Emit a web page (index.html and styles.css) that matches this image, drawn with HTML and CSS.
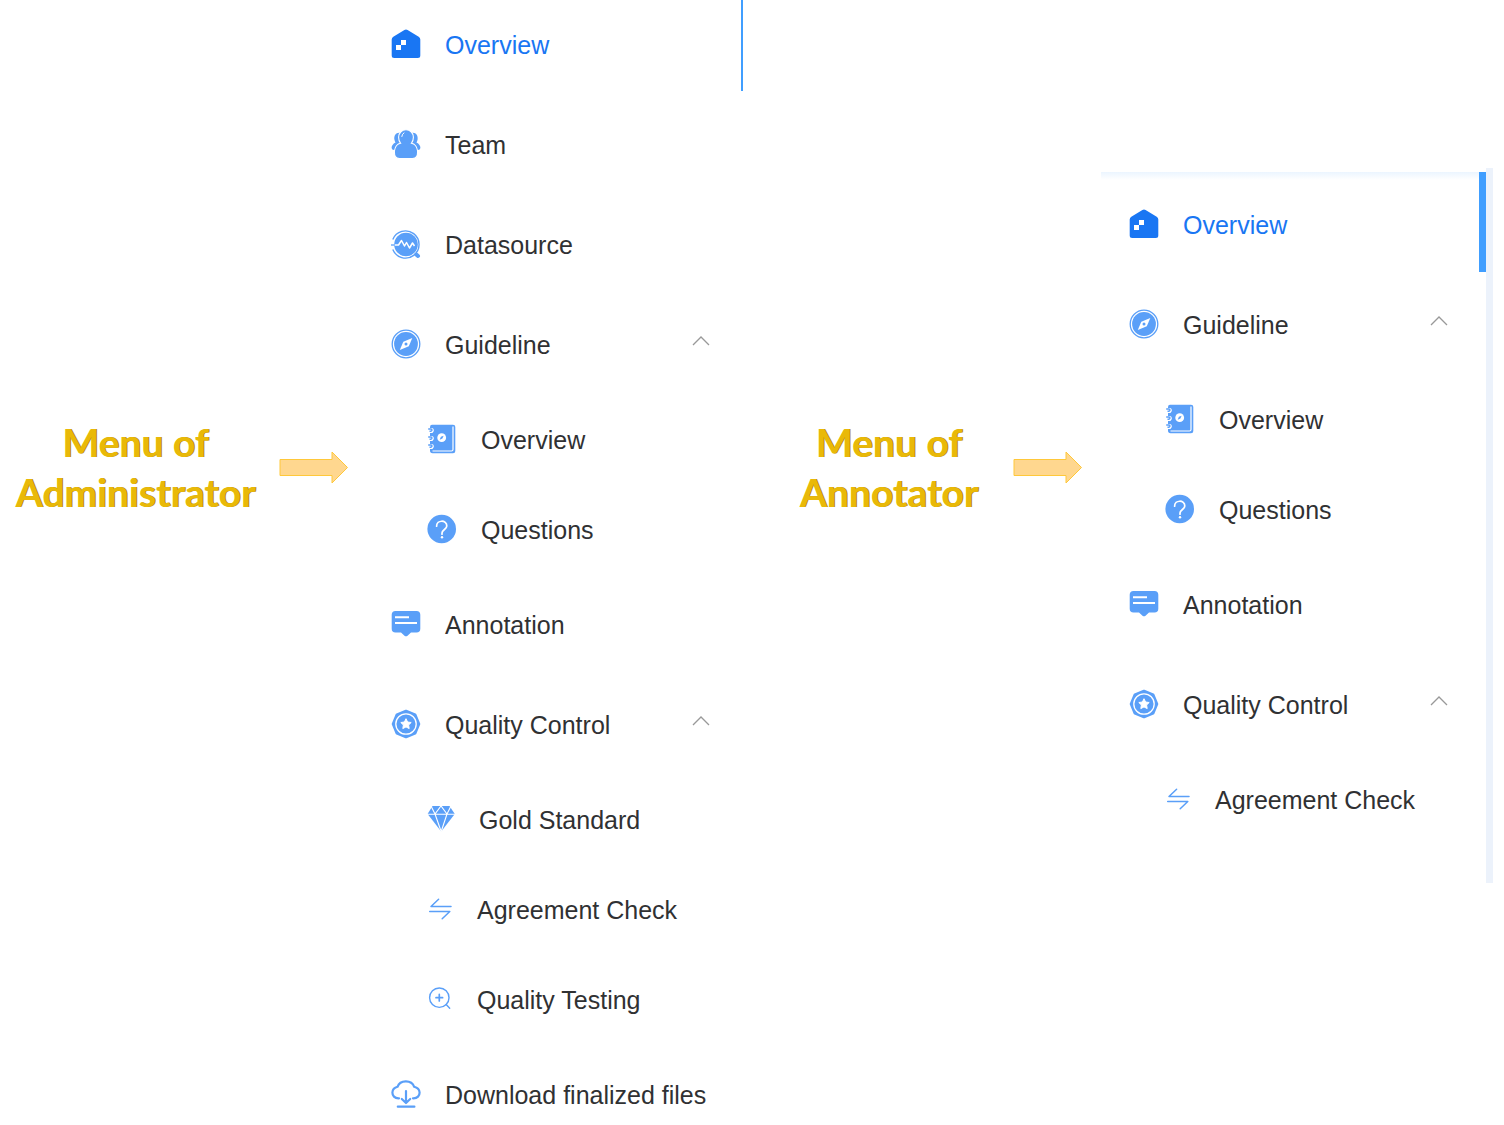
FILE: index.html
```html
<!DOCTYPE html>
<html lang="en">
<head>
<meta charset="utf-8">
<title>Project menus by role</title>
<link rel="stylesheet" href="styles.css">
</head>
<body>
<svg class="sprite" aria-hidden="true">
  <symbol id="home" viewBox="0 0 30 30">
    <path fill="currentColor" d="M13.4 1.1Q15 0 16.6 1.1L27.7 7.7Q29.3 8.8 29.3 10.5V26.5Q29.3 29 26.8 29H3.2Q.7 29 .7 26.5V10.5Q.7 8.8 2.3 7.7Z"/>
    <path fill="#fff" d="M10 11h5v5h-5zM5 16h5v5H5z"/>
  </symbol>
  <symbol id="team" viewBox="0 0 30 30">
    <path fill="currentColor" d="M8.500 3.800C4.800 3.500 2.800 7 3.400 10.500Q3.800 12.500 4.500 13.500Q.6 15.500.6 19Q.8 21.500 4 21H26Q29.200 21.500 29.400 19Q29.400 15.500 25.500 13.500Q26.200 12.500 26.600 10.500C27.200 7 25.200 3.500 21.500 3.800Z"/>
    <path fill="currentColor" stroke="#fff" stroke-width="1.100" d="M15 .8C10.600.8 7.600 4.200 7.600 8.200Q7.600 11.800 9.600 14.300Q4.600 15.200 3.500 21.500Q2.800 29.500 8.500 29.500H21.500Q27.200 29.500 26.500 21.500Q25.400 15.200 20.400 14.300Q22.400 11.800 22.400 8.200C22.400 4.200 19.400.8 15 .8Z"/>
    <path fill="none" stroke="#fff" stroke-linecap="round" d="M10.800 7.500Q11 5 13 3.800"/>
  </symbol>
  <symbol id="data" viewBox="0 0 30 30">
    <path fill="none" stroke="currentColor" stroke-width="1.400" d="M1.800 10.500A13.600 13.600 0 1 1 1.800 20.500"/>
    <circle cx="15" cy="15.500" r="11.800" fill="currentColor"/>
    <path fill="none" stroke="#fff" stroke-width="1.500" stroke-linejoin="round" d="M3 16H7.500L10.500 11.500L13.500 17L15.500 13.500L18.500 19L21.500 14L23.500 17"/>
    <path stroke="currentColor" stroke-width="1.300" d="M0 16H4"/>
    <path stroke="currentColor" stroke-width="4" stroke-linecap="round" d="M25.300 25.500L27 27"/>
  </symbol>
  <symbol id="compass" viewBox="0 0 30 30">
    <circle cx="15" cy="15" r="13.800" fill="none" stroke="currentColor" stroke-width="1.300"/>
    <circle cx="15" cy="15" r="11.900" fill="currentColor"/>
    <path fill="#fff" d="M21.300 9L17.800 17.200L8.800 21L12.300 12.700Z"/>
    <circle cx="15" cy="15" r="1.500" fill="currentColor"/>
  </symbol>
  <symbol id="book" viewBox="0 0 30 30">
    <path fill="currentColor" d="M5 .8H26Q28.300.8 28.300 3V27Q28.300 29.300 26 29.300H5.500Q3 29.300 3 26.500V3Q3 .8 5 .8Z"/>
    <path fill="none" stroke="#fff" stroke-width="1.200" d="M26 2.500V25.500Q26 27 24.500 27H5.500"/>
    <g fill="none">
      <path stroke="#fff" stroke-width="3.200" d="M0 5.500H4.500Q6 6 4.500 7.500H3M0 13.500H4.500Q6 14 4.500 15.500H3M0 21.500H4.500Q6 22 4.500 23.500H3"/>
      <path stroke="currentColor" stroke-width="1.400" d="M1.200 5H4Q6 6 4 7.200H2.500M1.200 13H4Q6 14 4 15.200H2.500M1.200 21H4Q6 22 4 23.200H2.500"/>
    </g>
    <circle cx="14.700" cy="13.700" r="4.400" fill="#fff"/>
    <path fill="currentColor" d="M16.600 11.700L15.400 14.600L12.700 15.700L13.900 12.800Z"/>
  </symbol>
  <symbol id="question" viewBox="0 0 30 30">
    <circle cx="14.700" cy="15" r="14.300" fill="currentColor"/>
    <path fill="none" stroke="#fff" stroke-width="1.700" stroke-linecap="round" d="M9.600 12.200C9.600 5.600 19.800 5.600 19.800 12C19.800 15.200 15.200 15.700 15 19V20.200"/>
    <circle cx="15" cy="23.300" r="1.200" fill="#fff"/>
  </symbol>
  <symbol id="comment" viewBox="0 0 30 30">
    <path fill="currentColor" d="M4.500 2H25.500Q29.300 2 29.300 5.800V19.700Q29.300 23.500 25.500 23.500H20L16.500 26.700Q15 27.800 13.500 26.700L10 23.500H4.500Q.7 23.500.7 19.700V5.800Q.7 2 4.500 2Z"/>
    <path stroke="#fff" stroke-width="2" d="M4 8.300H18M4 14.100H26"/>
  </symbol>
  <symbol id="badge" viewBox="0 0 30 30">
    <path fill="currentColor" stroke="currentColor" stroke-width="3" stroke-linejoin="round" d="M15 2.200L24 5.800L27.800 15L24 24.200L15 27.800L6 24.200L2.200 15L6 5.800Z"/>
    <circle cx="15" cy="15" r="10.200" fill="none" stroke="#fff" stroke-width="1.300"/>
    <path fill="#fff" stroke="#fff" stroke-linejoin="round" d="M15 9.700L16.600 13L20.200 13.500L17.600 16L18.200 19.600L15 17.900L11.800 19.600L12.400 16L9.800 13.500L13.400 13Z"/>
  </symbol>
  <symbol id="diamond" viewBox="0 0 28 30">
    <path fill="currentColor" d="M5.500 2H22.500L27.800 10L14.200 27.500L.6 10Z"/>
    <path fill="none" stroke="#fff" stroke-width="1.100" d="M0 10.300H28M4 2L8 10L14 2L20 10L24 2M8 10L14.200 27.500L20 10"/>
  </symbol>
  <symbol id="swap" viewBox="0 0 26 30">
    <path fill="none" stroke="currentColor" stroke-width="1.500" stroke-linecap="round" stroke-linejoin="round" d="M24 12.500H4L11.600 5.300M2.700 17.500H22.800L15.200 24.700"/>
  </symbol>
  <symbol id="inspect" viewBox="0 0 26 30">
    <g fill="none" stroke="currentColor" stroke-width="1.400" stroke-linecap="round">
      <circle cx="12.300" cy="13.700" r="9.700"/>
      <path d="M19.200 20.600L22.700 24.300"/>
      <path stroke-width="1.700" d="M9 13.700H15.600M12.300 10.400V17"/>
    </g>
  </symbol>
  <symbol id="cloud" viewBox="0 0 30 30">
    <g fill="none" stroke="currentColor" stroke-width="2.200" stroke-linecap="round" stroke-linejoin="round">
      <path d="M8 19.300C3.500 19.500 1.300 16.500 1.400 13.500Q1.700 9 6.500 7.800C9 .8 20.500.5 23.200 7.800Q28.200 9 28.600 13.500C28.700 16.500 26.500 19.500 22 19.300"/>
      <path d="M15 12V23.500M10.800 20L15 24L19.200 20M6.800 27.700H23.400"/>
    </g>
  </symbol>
  <symbol id="chevron" viewBox="0 0 18 20">
    <path fill="none" stroke="#999" stroke-width="1.300" d="M1 11L9 3L17 11"/>
  </symbol>
  <symbol id="arrow" viewBox="0 0 70 34">
    <path fill="#ffd78f" stroke="#ffc83a" d="M1 9.500H53V2L68.500 17.500L53 33V25.500H1Z"/>
  </symbol>
</svg>

<main class="page">
  <header class="caption">
    <h2 class="caption-text">Menu of<br>Administrator</h2>
    <svg class="arrow" aria-hidden="true"><use href="#arrow"/></svg>
  </header>

  <nav class="menu menu-admin" aria-label="Administrator">
    <a class="item active" href="#overview"><svg class="icon"><use href="#home"/></svg><span class="label">Overview</span></a>
    <a class="item" href="#team"><svg class="icon"><use href="#team"/></svg><span class="label">Team</span></a>
    <a class="item" href="#datasource"><svg class="icon"><use href="#data"/></svg><span class="label">Datasource</span></a>
    <button class="item" type="button" aria-expanded="true"><svg class="icon"><use href="#compass"/></svg><span class="label">Guideline</span><svg class="chevron"><use href="#chevron"/></svg></button>
    <a class="item sub" href="#guide"><svg class="icon"><use href="#book"/></svg><span class="label">Overview</span></a>
    <a class="item sub" href="#questions"><svg class="icon"><use href="#question"/></svg><span class="label">Questions</span></a>
    <a class="item" href="#annotation"><svg class="icon"><use href="#comment"/></svg><span class="label">Annotation</span></a>
    <button class="item" type="button" aria-expanded="true"><svg class="icon"><use href="#badge"/></svg><span class="label">Quality Control</span><svg class="chevron"><use href="#chevron"/></svg></button>
    <a class="item sub" href="#gold"><svg class="icon icon-medium"><use href="#diamond"/></svg><span class="label">Gold Standard</span></a>
    <a class="item sub" href="#agreement"><svg class="icon icon-narrow"><use href="#swap"/></svg><span class="label">Agreement Check</span></a>
    <a class="item sub" href="#testing"><svg class="icon icon-narrow"><use href="#inspect"/></svg><span class="label">Quality Testing</span></a>
    <a class="item" href="#download"><svg class="icon"><use href="#cloud"/></svg><span class="label">Download finalized files</span></a>
  </nav>

  <header class="caption caption-annotator">
    <h2 class="caption-text">Menu of<br>Annotator</h2>
    <svg class="arrow" aria-hidden="true"><use href="#arrow"/></svg>
  </header>

  <nav class="menu menu-annotator" aria-label="Annotator">
    <div class="panel">
      <a class="item active" href="#overview"><svg class="icon"><use href="#home"/></svg><span class="label">Overview</span></a>
      <button class="item" type="button" aria-expanded="true"><svg class="icon"><use href="#compass"/></svg><span class="label">Guideline</span><svg class="chevron"><use href="#chevron"/></svg></button>
      <a class="item sub" href="#guide"><svg class="icon"><use href="#book"/></svg><span class="label">Overview</span></a>
      <a class="item sub" href="#questions"><svg class="icon"><use href="#question"/></svg><span class="label">Questions</span></a>
      <a class="item" href="#annotation"><svg class="icon"><use href="#comment"/></svg><span class="label">Annotation</span></a>
      <button class="item" type="button" aria-expanded="true"><svg class="icon"><use href="#badge"/></svg><span class="label">Quality Control</span><svg class="chevron"><use href="#chevron"/></svg></button>
      <a class="item sub" href="#agreement"><svg class="icon icon-narrow"><use href="#swap"/></svg><span class="label">Agreement Check</span></a>
    </div>
  </nav>
</main>
</body>
</html>
```
FILE: styles.css
```css
* {
  box-sizing: border-box;
}

body {
  margin: 0;
  background: #fff;
  color: #303133;
  font-family: "Liberation Sans", Arial, sans-serif;
  font-size: 25px;
}

.sprite {
  display: none;
}

.page {
  display: grid;
  grid-template-columns: minmax(0, 350fr) 393px minmax(0, 358fr) 392px;
  align-items: start;
  padding-right: 11px;
  overflow: hidden;
}

/* Role captions */
.caption {
  display: flex;
  align-items: center;
  gap: 8px;
  padding: 417px 1px 0 0;
}

.caption-annotator {
  padding: 417px 18px 0 30px;
}

.caption-text {
  flex: 1;
  margin: 0;
  color: #e9b908;
  font-family: Lato, sans-serif;
  font-size: 39px;
  font-weight: 700;
  line-height: 50px;
  text-align: center;
  text-shadow: 1px 0 0 #b08600;
}

.arrow {
  flex: none;
  width: 70px;
  height: 34px;
}

/* Menus */
.menu {
  --inset: 41px;
  --chevron-inset: 33px;
}

.menu-admin {
  margin: -7px 0 -13px;
}

.menu-annotator {
  --inset: 28px;
  --chevron-inset: 38px;
  margin-top: 168px;
  padding-top: 4px;
  border-right: 7px solid #ecf2fb;
}

.panel {
  padding: 2px 0 39px;
  background: linear-gradient(#ebf5ff, #fff) top / 100% 8px no-repeat;
}

.item {
  position: relative;
  display: flex;
  align-items: center;
  gap: 24px;
  width: 100%;
  height: 100px;
  padding: 0 var(--chevron-inset) 0 var(--inset);
  border: 0;
  background: none;
  color: inherit;
  font: inherit;
  text-align: left;
  text-decoration: none;
}

.sub {
  height: 90px;
  padding-left: calc(var(--inset) + 36px);
}

.active {
  color: #1976f3;
}

.menu-admin .active {
  height: 101px;
}

.active::after {
  content: "";
  position: absolute;
  right: 0;
  top: 0;
  bottom: 3px;
  width: 2px;
  background: #409eff;
}

.menu-annotator .active::after {
  top: -2px;
  bottom: 2px;
  width: 7px;
}

.icon {
  flex: none;
  width: 30px;
  height: 30px;
  color: #5a9ff8;
}

.active .icon {
  color: #1976f3;
}

.icon-medium {
  width: 28px;
}

.icon-narrow {
  width: 26px;
}

.label {
  flex: 1;
  padding-top: 2px;
  line-height: 30px;
  white-space: nowrap;
}

.chevron {
  flex: none;
  width: 18px;
  height: 20px;
}
```
